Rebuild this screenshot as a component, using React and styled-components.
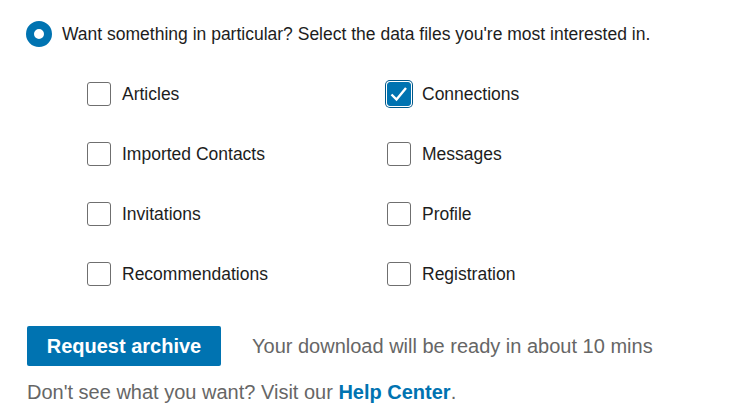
import React, { useState } from 'react';
import styled, { createGlobalStyle } from 'styled-components';

const GlobalStyle = createGlobalStyle`
  body {
    margin: 0;
    background: #fff;
    font-family: "Liberation Sans", Arial, sans-serif;
  }
`;

const Page = styled.div`
  padding: 21px 26px 0;
  width: 746px;
  box-sizing: border-box;
`;

const RadioRow = styled.div`
  display: flex;
  align-items: center;
  gap: 10px;
  height: 26px;
`;

const Radio = styled.span`
  width: 26px;
  height: 26px;
  border-radius: 50%;
  box-sizing: border-box;
  border: 8px solid #0073b1;
  background: #fff;
  flex: none;
`;

const RadioLabel = styled.span`
  font-size: 17.5px;
  color: #1d1d1d;
`;

const Grid = styled.div`
  display: grid;
  grid-template-columns: 300px 300px;
  grid-auto-rows: 60px;
  margin: 17px 0 0 61px;
  align-items: center;
`;

const Option = styled.label`
  display: flex;
  align-items: center;
  gap: 11px;
  cursor: pointer;
  font-size: 17.5px;
  color: #1d1d1d;
`;

const Box = styled.span`
  width: 24px;
  height: 24px;
  box-sizing: border-box;
  border-radius: 3px;
  flex: none;
  display: flex;
  align-items: center;
  justify-content: center;
  border: 1px solid ${p => (p.checked ? '#0073b1' : '#6f6f6f')};
  background: ${p => (p.checked ? '#0073b1' : '#fff')};
  box-shadow: ${p => (p.checked ? '0 0 0 1px #fff, 0 0 0 2px #00588a' : 'none')};
`;

const Actions = styled.div`
  display: flex;
  align-items: center;
  gap: 31px;
  margin-top: 22px;
`;

const Button = styled.button`
  height: 40px;
  width: 194px;
  margin-left: 1px;
  border: none;
  border-radius: 2px;
  background: #0073b1;
  color: #fff;
  font-family: inherit;
  font-size: 20px;
  font-weight: 700;
  cursor: pointer;
`;

const Note = styled.span`
  font-size: 20px;
  color: #666;
`;

const Footer = styled.p`
  margin: 15px 0 0 1px;
  font-size: 20px;
  color: #666;
`;

const HelpLink = styled.a`
  color: #0073b1;
  font-weight: 700;
  text-decoration: none;
`;

const files = [
  ['Articles', 'Connections'],
  ['Imported Contacts', 'Messages'],
  ['Invitations', 'Profile'],
  ['Recommendations', 'Registration'],
];

const Check = () => (
  <svg width="20" height="18" viewBox="0 0 20 18">
    <path d="M2.5 9.5 L7.5 14.5 L17 3" fill="none" stroke="#fff" strokeWidth="2.4" />
  </svg>
);

export default function App() {
  const [selected, setSelected] = useState({ Connections: true });
  const toggle = name => setSelected(s => ({ ...s, [name]: !s[name] }));

  return (
    <Page>
      <GlobalStyle />
      <RadioRow>
        <Radio />
        <RadioLabel>Want something in particular? Select the data files you're most interested in.</RadioLabel>
      </RadioRow>
      <Grid>
        {files.flat().map(name => (
          <Option key={name} onClick={() => toggle(name)}>
            <Box checked={!!selected[name]}>{selected[name] && <Check />}</Box>
            {name}
          </Option>
        ))}
      </Grid>
      <Actions>
        <Button>Request archive</Button>
        <Note>Your download will be ready in about 10 mins</Note>
      </Actions>
      <Footer>
        Don't see what you want? Visit our <HelpLink href="#">Help Center</HelpLink>.
      </Footer>
    </Page>
  );
}
